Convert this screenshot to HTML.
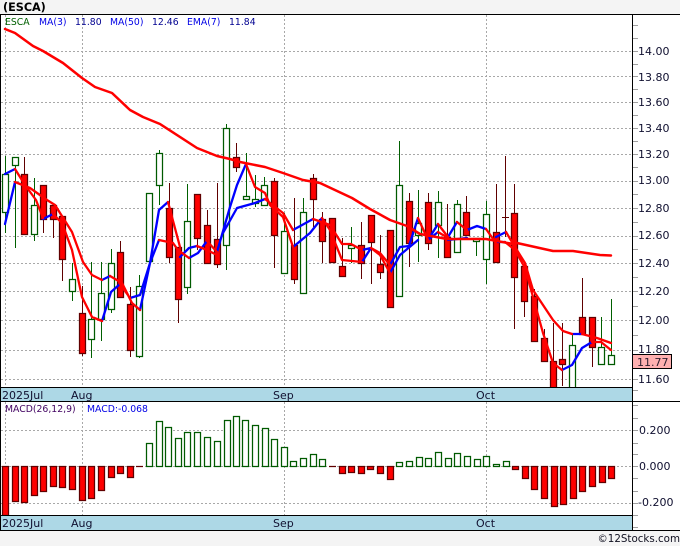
<!DOCTYPE html>
<html><head><meta charset="utf-8"><style>
html,body{margin:0;padding:0;background:#f4f4f4;width:680px;height:546px;overflow:hidden}
svg{display:block}
text{font-family:"DejaVu Sans","Liberation Sans",sans-serif}
</style></head><body>
<svg width="680" height="546" viewBox="0 0 680 546" xmlns="http://www.w3.org/2000/svg">
<rect x="0" y="0" width="680" height="546" fill="#f4f4f4"/>
<rect x="0" y="14" width="680" height="516" fill="#fff"/>
<text x="3" y="11" font-size="11.2" font-weight="bold" fill="#000">(ESCA)</text>

<!-- grid -->
<g stroke="#a8a8a8" stroke-width="1" stroke-dasharray="2 2" fill="none" shape-rendering="crispEdges">
<path d="M1 51.5H632M1 76.5H632M1 102.5H632M1 128.5H632M1 154.5H632M1 181.5H632M1 208.5H632M1 236.5H632M1 263.5H632M1 291.5H632M1 320.5H632M1 350.5H632M1 379.5H632"/>
<path d="M5.5 15V387M82.5 15V387M284.5 15V387M486.5 15V387"/>
<path d="M1 430.5H632M1 466.5H632M1 503.5H632"/>
<path d="M5.5 402V515M82.5 402V515M284.5 402V515M486.5 402V515"/>
</g>

<!-- wicks -->
<g fill="none" stroke-width="1" shape-rendering="crispEdges">
<path stroke="#600000" d="M24.5 157V234M43.5 185V233M53.5 205V238M62.5 216V281M82.5 286V356M120.5 241V298M130.5 287V357M169.5 183V263M178.5 247V323M197.5 194V250M207.5 210V263M217.5 183V268M236.5 143V172M274.5 178V268M294.5 198V284M313.5 174V227M322.5 212V263M332.5 218V262M342.5 238V276M361.5 222V279M371.5 222V284M380.5 235V279M390.5 230V307M409.5 193V267M428.5 193V250M447.5 204V257M466.5 196V235M496.5 184V262M505.5 156V237M502 217.5H509M514.5 184V329M524.5 266V317M534.5 289V341M544.5 329V362M553.5 323V388M562.5 323V386M582.5 278V334M592.5 317V367"/>
<path stroke="#006000" d="M5.5 156V233M15.5 157V248M34.5 178V241M72.5 263V301M91.5 262V358M101.5 262V341M111.5 249V313M139.5 275V358M149.5 193V261M159.5 150V205M187.5 184V294M226.5 124V270M246.5 153V199M255.5 175V207M264.5 177V205M284.5 213V273M303.5 198V293M351.5 227V263M399.5 141V296M418.5 190V262M438.5 191V258M457.5 200V252M476.5 238V256M486.5 201V284M572.5 335V388M601.5 317V364M611.5 299V364"/>
</g>

<!-- bodies -->
<g stroke-width="1.25">
<path fill="#fff" stroke="#005a00" d="M2.5 174.5h6v38h-6zM12.5 157.5h6v8h-6zM31.5 205.5h6v29h-6zM69.5 279.5h6v12h-6zM88.5 319.5h6v20h-6zM98.5 293.5h6v26h-6zM108.5 263.5h6v46h-6zM136.5 286.5h6v70h-6zM146.5 193.5h6v68h-6zM156.5 153.5h6v32h-6zM184.5 221.5h6v66h-6zM223.5 128.5h6v117h-6zM243.5 196.5h6v3h-6zM252.5 199.5h6v4h-6zM261.5 185.5h6v20h-6zM281.5 231.5h6v42h-6zM300.5 212.5h6v81h-6zM348.5 245.5h6v3h-6zM396.5 185.5h6v111h-6zM415.5 223.5h6v12h-6zM435.5 202.5h6v23h-6zM454.5 204.5h6v48h-6zM473.5 238.5h6v3h-6zM483.5 214.5h6v45h-6zM569.5 345.5h6v45h-6zM598.5 347.5h6v17h-6zM608.5 355.5h6v9h-6z"/>
<path fill="#f00" stroke="#600000" d="M21.5 174.5h6v60h-6zM40.5 185.5h6v34h-6zM50.5 205.5h6v14h-6zM59.5 216.5h6v43h-6zM79.5 313.5h6v40h-6zM117.5 252.5h6v45h-6zM127.5 304.5h6v46h-6zM166.5 208.5h6v49h-6zM175.5 247.5h6v52h-6zM194.5 194.5h6v44h-6zM204.5 225.5h6v38h-6zM214.5 239.5h6v25h-6zM233.5 157.5h6v10h-6zM271.5 181.5h6v54h-6zM291.5 245.5h6v34h-6zM310.5 178.5h6v21h-6zM319.5 219.5h6v22h-6zM329.5 218.5h6v44h-6zM339.5 266.5h6v10h-6zM358.5 245.5h6v18h-6zM368.5 215.5h6v27h-6zM377.5 264.5h6v8h-6zM387.5 230.5h6v77h-6zM406.5 201.5h6v42h-6zM425.5 202.5h6v41h-6zM444.5 237.5h6v20h-6zM463.5 212.5h6v23h-6zM493.5 232.5h6v30h-6zM511.5 213.5h6v64h-6zM521.5 266.5h6v35h-6zM531.5 296.5h6v45h-6zM541.5 338.5h6v23h-6zM550.5 361.5h6v29h-6zM559.5 359.5h6v5h-6zM579.5 317.5h6v17h-6zM589.5 317.5h6v30h-6z"/>
</g>

<!-- MA lines -->
<g fill="none" stroke-width="2.3" stroke-linejoin="round" stroke-linecap="round">
<path stroke="#00f" d="M5 224L15 182M5 174L15 169M43 219L53 214M102 280L110 276M102 321L111 292L120 284M130 298L140 295L150 263L159 210L168 202M140 310L150 263L159 240M180 257L189 248L197 246M189 258L198 253L207 241M217 252L230 207L237 185L246 164M223 233L237 208L255 203L265 199M293 247L310 233L322 218M293 230L313 219M362 262L371 248M362 250L371 248M390 273L400 255L418 240M390 265L400 247L409 246L418 218M428 240L438 224M428 240L438 232M448 237L457 222M448 240L467 238M467 230L477 226L486 229M496 237L506 232M496 242L505 242M562 370L572 365L582 348L592 342M572 334L582 334"/>
<path stroke="#f00" d="M15 169L25 185L36 200L43 218M15 182L30 188L47 200L55 205L72 232L83 262L92 275L102 280M53 214L62 223L72 250L82 297L92 317L102 321M110 276L122 283L132 303L140 310M120 284L130 298M159 240L173 243L178 250L189 258M168 202L180 247M197 246L207 250L217 255M207 241L217 252M246 164L255 187L265 193L270 205L283 217L293 247M265 199L283 213L293 230M322 218L330 230L342 260L362 262M313 219L330 225L342 244L351 244L362 250M371 248L380 255L390 273M371 248L380 253L390 265M418 218L428 240M438 224L448 237M438 232L448 238M457 222L467 230M486 229L496 243M506 232L515 247L525 263L533 290L553 320L563 331L572 334M582 334L597 338L611 343M505 242L515 250L525 268L543 333L553 363L562 370M592 342L601 342L611 350"/>
<path stroke="#f00" stroke-width="2.5" d="M5 29L15 33L33 46L43 51L63 63L82 78L95 87L112 93L130 110L143 117L160 124L197 148L217 156L230 159L240 162L265 167L283 173L303 180L320 183L352 198L370 209L390 220L407 226L420 234L447 239L486 239L513 244L517 243L553 251L573 251L600 255L611 255.5"/>
</g>

<!-- MACD bars -->
<g stroke-width="1.25">
<path fill="#fff" stroke="#005a00" d="M146.5 443.5h6V466.5h-6zM156.5 421.5h6V466.5h-6zM165.5 427.5h6V466.5h-6zM175.5 438.5h6V466.5h-6zM184.5 432.5h6V466.5h-6zM194.5 432.5h6V466.5h-6zM204.5 437.5h6V466.5h-6zM214.5 441.5h6V466.5h-6zM224.5 420.5h6V466.5h-6zM233.5 416.5h6V466.5h-6zM242.5 420.5h6V466.5h-6zM252.5 425.5h6V466.5h-6zM262.5 428.5h6V466.5h-6zM271.5 439.5h6V466.5h-6zM281.5 447.5h6V466.5h-6zM290.5 461.5h6V466.5h-6zM300.5 458.5h6V466.5h-6zM310.5 454.5h6V466.5h-6zM319.5 459.5h6V466.5h-6zM396.5 462.5h6V466.5h-6zM406.5 461.5h6V466.5h-6zM416.5 457.5h6V466.5h-6zM425.5 458.5h6V466.5h-6zM435.5 452.5h6V466.5h-6zM445.5 458.5h6V466.5h-6zM454.5 453.5h6V466.5h-6zM464.5 456.5h6V466.5h-6zM474.5 459.5h6V466.5h-6zM483.5 456.5h6V466.5h-6zM493.5 464.5h6V466.5h-6zM503.5 461.5h6V466.5h-6z"/>
<path fill="#f00" stroke="#600000" d="M2.5 466.5h6v49h-6zM12.5 466.5h6v35h-6zM21.5 466.5h6v36h-6zM31.5 466.5h6v29h-6zM40.5 466.5h6v25h-6zM50.5 466.5h6v20h-6zM59.5 466.5h6v21h-6zM69.5 466.5h6v23h-6zM79.5 466.5h6v34h-6zM88.5 466.5h6v32h-6zM98.5 466.5h6v24h-6zM108.5 466.5h6v11h-6zM117.5 466.5h6v7h-6zM127.5 466.5h6v11h-6zM136 466.5h7M329 466.5h7M339.5 466.5h6v7h-6zM348.5 466.5h6v6h-6zM358.5 466.5h6v7h-6zM367.5 466.5h6v3h-6zM377.5 466.5h6v7h-6zM387.5 466.5h6v13h-6zM512.5 466.5h6v3h-6zM522.5 466.5h6v12h-6zM531.5 466.5h6v23h-6zM541.5 466.5h6v32h-6zM551.5 466.5h6v40h-6zM560.5 466.5h6v38h-6zM570.5 466.5h6v32h-6zM579.5 466.5h6v25h-6zM589.5 466.5h6v20h-6zM599.5 466.5h6v16h-6zM608.5 466.5h6v12h-6z"/>
</g>

<!-- bands -->
<rect x="1" y="388" width="631" height="13" fill="#add8e6"/>
<rect x="1" y="516" width="631" height="14" fill="#add8e6"/>

<!-- ticks -->
<g stroke="#a0a0a0" stroke-width="1" shape-rendering="crispEdges" fill="none">
<path d="M633 25.5h5M633 38.5h5M633 51.5h5M633 64.5h5M633 76.5h5M633 89.5h5M633 102.5h5M633 115.5h5M633 128.5h5M633 141.5h5M633 154.5h5M633 167.5h5M633 181.5h5M633 194.5h5M633 208.5h5M633 222.5h5M633 236.5h5M633 249.5h5M633 263.5h5M633 277.5h5M633 291.5h5M633 306.5h5M633 320.5h5M633 335.5h5M633 350.5h5M633 379.5h5M633 390.5h5"/>
<path d="M633 405.5h5M633 418.5h5M633 430.5h5M633 443.5h5M633 454.5h5M633 466.5h5M633 478.5h5M633 491.5h5M633 503.5h5M633 515.5h5M633 527.5h5"/>
</g>

<!-- frame -->
<g stroke="#000" stroke-width="1" shape-rendering="crispEdges" fill="none">
<path d="M0 14.5H680M0 387.5H632M0 401.5H680M0 515.5H632M0 530.5H680M632.5 14V530M0.5 14V530"/>
</g>

<!-- legend -->
<g font-size="9.3">
<text x="5" y="25" fill="#006000">ESCA</text>
<text x="39" y="25" fill="#0000e6">MA(3)</text>
<text x="75" y="25" fill="#000090">11.80</text>
<text x="110" y="25" fill="#0000e6">MA(50)</text>
<text x="152" y="25" fill="#000090">12.46</text>
<text x="187" y="25" fill="#0000e6">EMA(7)</text>
<text x="229" y="25" fill="#000090">11.84</text>
<text x="5" y="412" fill="#400060">MACD(26,12,9)</text>
<text x="87" y="412" fill="#0000e6">MACD:-0.068</text>
</g>

<!-- axis labels -->
<g font-size="11" fill="#101030">
<text x="638" y="55">14.00</text>
<text x="638" y="81">13.80</text>
<text x="638" y="106">13.60</text>
<text x="638" y="132">13.40</text>
<text x="638" y="158">13.20</text>
<text x="638" y="184">13.00</text>
<text x="638" y="212">12.80</text>
<text x="638" y="239">12.60</text>
<text x="638" y="267">12.40</text>
<text x="638" y="295">12.20</text>
<text x="638" y="324">12.00</text>
<text x="638" y="353">11.80</text>
<text x="638" y="383">11.60</text>
<text x="639" y="434">0.200</text>
<text x="639" y="470">0.000</text>
<text x="638" y="506">-0.200</text>
<text x="2" y="399">2025Jul</text>
<text x="71" y="399">Aug</text>
<text x="273" y="399">Sep</text>
<text x="476" y="399">Oct</text>
<text x="2" y="527">2025Jul</text>
<text x="71" y="527">Aug</text>
<text x="273" y="527">Sep</text>
<text x="476" y="527">Oct</text>
</g>

<!-- price box -->
<rect x="632.5" y="354.5" width="39" height="14" fill="#ffb0b0" stroke="#000" shape-rendering="crispEdges"/>
<text x="637" y="366" font-size="11" fill="#302030">11.77</text>

<text x="680" y="542" font-size="10.3" fill="#101020" text-anchor="end">©12Stocks.com</text>
</svg>
</body></html>
